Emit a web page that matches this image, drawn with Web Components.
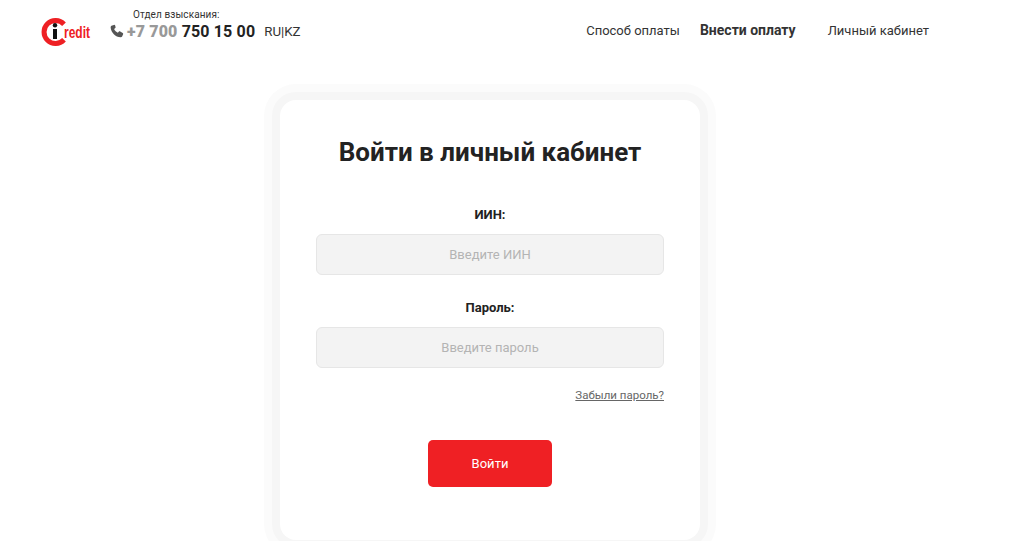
<!DOCTYPE html>
<html lang="ru">
<head>
<meta charset="utf-8">
<title>iCredit</title>
<style>
  html, body { margin: 0; height: 541px; overflow: hidden; background: #fff; font-family: Roboto, "Liberation Sans", sans-serif; }
</style>
</head>
<body>
<site-header></site-header>
<login-card></login-card>

<script>
class SiteHeader extends HTMLElement {
  constructor() {
    super();
    this.attachShadow({ mode: 'open' });
    this.shadowRoot.innerHTML = `
      <style>
        :host { display: flex; height: 60px; padding: 0 95px 0 41px; align-items: flex-start; justify-content: space-between; color: #222; }
        .left { display: flex; align-items: flex-start; }
        .logo { width: 49px; height: 28px; margin-top: 18px; position: relative; }
        .logo svg { display: block; }
        .logo span { position: absolute; left: 23px; top: 6px; font: bold 16px/18px "Liberation Sans", sans-serif; color: #ee2024; transform: scaleX(.75); transform-origin: left center; }
        .contact { margin-left: 20px; margin-top: 8px; }
        .dept { font-size: 10px; line-height: 13px; margin-left: 23px; letter-spacing: .1px; color: #333; }
        .row { display: flex; align-items: center; height: 20px; }
        .row svg { margin-right: 3px; }
        .phone { font-size: 16px; font-weight: 700; letter-spacing: .15px; color: #222; white-space: nowrap; }
        .phone b { color: #999; }
        .lang { font-size: 13.300px; margin-left: 9px; color: #333; }
        nav { display: flex; margin-top: 22px; font-size: 13px; line-height: 17px; color: #333; }
        nav a { white-space: nowrap; }
        nav a.on { font-weight: 700; font-size: 14px; color: #333; margin: 0 32px 0 20px; }
      </style>
      <div class="left">
        <div class="logo">
          <svg width="29" height="28" viewBox="0 0 29 28">
            <path d="M23 6.200A11.500 11.500 0 1 0 23 21.800" fill="none" stroke="#ee2024" stroke-width="5"/>
            <circle cx="14" cy="7.200" r="2.200" fill="#111"/>
            <rect x="12" y="11" width="4" height="10" fill="#111"/>
          </svg>
          <span>redit</span>
        </div>
        <div class="contact">
          <div class="dept">Отдел взыскания:</div>
          <div class="row">
            <svg width="14" height="14" viewBox="0 0 24 24"><path fill="#555" d="M6.600 1.500 2.400 3.200C1.400 3.700 1 4.700 1.100 5.800 2 14.800 9.200 22 18.200 22.900c1.100.1 2.100-.3 2.600-1.300l1.700-4.200c.3-.8 0-1.700-.7-2.100l-4.300-2.600c-.7-.4-1.600-.3-2.200.3l-1.800 2.100c-2.900-1.500-5.100-3.700-6.500-6.500l2.100-1.800c.6-.6.7-1.500.3-2.200L8.700 2.200c-.4-.7-1.300-1-2.100-.7z"/></svg>
            <span class="phone"><b>+7 700</b> 750 15 00</span>
            <span class="lang">RU|KZ</span>
          </div>
        </div>
      </div>
      <nav>
        <a>Способ оплаты</a>
        <a class="on">Внести оплату</a>
        <a>Личный кабинет</a>
      </nav>`;
  }
}

class FormField extends HTMLElement {
  constructor() {
    super();
    this.attachShadow({ mode: 'open' });
    this.shadowRoot.innerHTML = `
      <style>
        :host { display: block; }
        label { display: block; text-align: center; font-size: 13px; line-height: 17px; font-weight: 700; color: #222; margin-bottom: 11px; }
        input {
          display: block; width: 100%; height: 41px; box-sizing: border-box;
          background: #f3f3f3; border: 1px solid #e6e6e6; border-radius: 6px;
          text-align: center; font: 13px Roboto, sans-serif; outline: none;
        }
        input::placeholder { color: #b4b4b4; opacity: 1; }
      </style>
      <label></label>
      <input>`;
    this.shadowRoot.querySelector('label').textContent = this.getAttribute('label');
    this.shadowRoot.querySelector('input').placeholder = this.getAttribute('placeholder');
  }
}

class LoginCard extends HTMLElement {
  constructor() {
    super();
    this.attachShadow({ mode: 'open' });
    this.shadowRoot.innerHTML = `
      <style>
        :host {
          display: block; box-sizing: border-box; width: 420px; height: 440px;
          margin: 40px 0 0 280px; padding: 37px 36px 0;
          background: #fff; border-radius: 16px;
          box-shadow: 0 0 0 8px #f6f6f6, 0 0 0 16px #fbfbfb;
        }
        h1 { margin: 0 0 39px; text-align: center; font-size: 26px; line-height: 30px; font-weight: 700; color: #222; }
        form-field + form-field { margin-top: 24px; }
        .forgot { display: block; text-align: right; margin-top: 20px; font-size: 11.500px; line-height: 15px; color: #666; text-decoration: underline; }
        button {
          display: block; width: 124px; height: 47px; margin: 37px auto 0;
          background: #ef2024; color: #fff; border: 0; border-radius: 5px;
          font: 13px Roboto, sans-serif;
        }
      </style>
      <h1>Войти в личный кабинет</h1>
      <form-field label="ИИН:" placeholder="Введите ИИН"></form-field>
      <form-field label="Пароль:" placeholder="Введите пароль"></form-field>
      <a class="forgot">Забыли пароль?</a>
      <button>Войти</button>`;
  }
}

customElements.define('form-field', FormField);
customElements.define('site-header', SiteHeader);
customElements.define('login-card', LoginCard);
</script>
</body>
</html>
